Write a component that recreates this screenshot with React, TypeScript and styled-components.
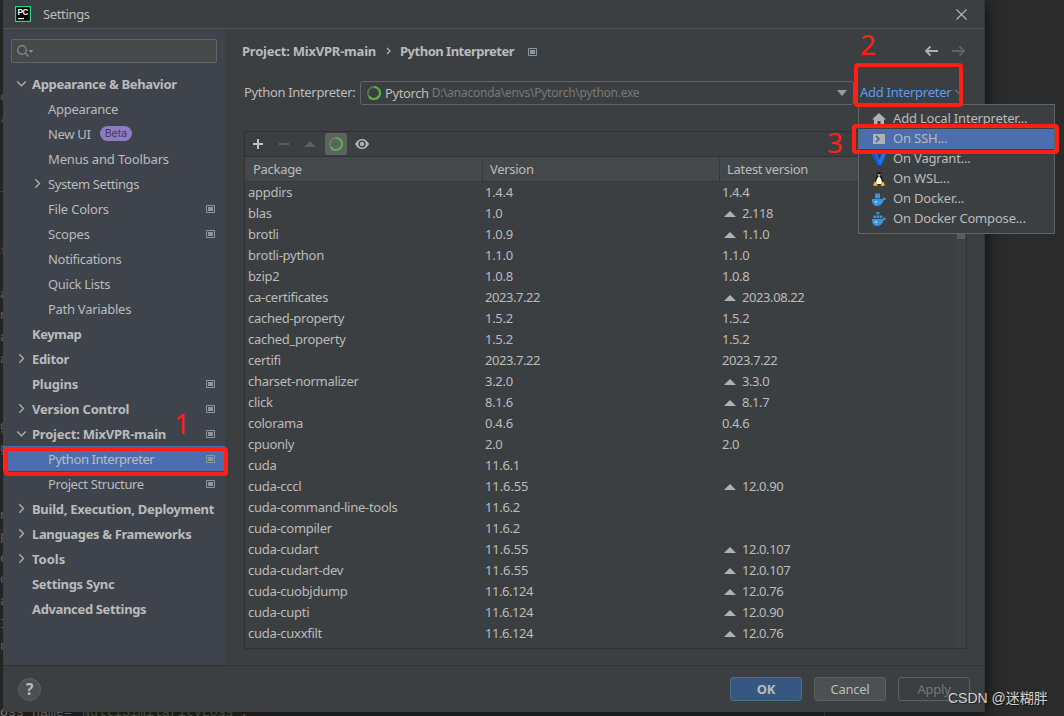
import React from 'react';
import styled, { createGlobalStyle } from 'styled-components';

const Global = createGlobalStyle`
  * { box-sizing: border-box; }
  html, body { margin: 0; height: 716px; overflow: hidden; background: #2b2b2b; }
  body { font: 13px/20px "Noto Sans", "Noto Sans CJK SC", sans-serif; color: #bbbbbb; }
`;

const Desktop = styled.div`
  position: relative;
  width: 1064px;
  height: 716px;
  overflow: hidden;
  background: #2b2b2b;
`;
const EditorStrip = styled.div`
  position: absolute;
  inset: 0;
  font: 13.3px/21px "Liberation Mono", monospace;
`;
const Code = styled.span<{ $x: number; $y: number; $c: string }>`
  position: absolute;
  left: ${p => p.$x}px;
  top: ${p => p.$y}px;
  color: ${p => p.$c};
  white-space: pre;
`;
const Guide = styled.span`
  position: absolute;
  left: 824px;
  bottom: 0;
  width: 1px;
  height: 20px;
  background: #4a4a4a;
`;
const Dialog = styled.main`
  position: relative;
  display: flex;
  flex-direction: column;
  width: 982px;
  height: 712px;
  margin-left: 3px;
  background: #3c3f41;
  border-right: 1px solid #333536;
  box-shadow: 3px 4px 14px rgba(0, 0, 0, 0.55);
`;
const TitleBar = styled.header`
  display: flex;
  align-items: center;
  height: 29px;
  flex: none;
  padding: 0 17px 0 12px;
  border-bottom: 1px solid #515355;
`;
const Title = styled.span`
  flex: 1;
  margin-left: 12px;
  letter-spacing: -0.35px;
`;
const Middle = styled.div`
  display: flex;
  flex: 1;
  min-height: 0;
`;
const Sidebar = styled.nav`
  width: 222px;
  flex: none;
  background: #3e434c;
  padding-top: 10px;
`;
const Search = styled.div`
  display: flex;
  align-items: center;
  width: 206px;
  height: 24px;
  margin: 0 0 8px 8px;
  padding-left: 5px;
  border: 1px solid #646464;
  border-radius: 2px;
  background: #45494a;
`;
const TreeRow = styled.div<{ $level: number; $selected?: boolean }>`
  display: flex;
  align-items: center;
  height: 25px;
  padding-left: ${p => 13 + p.$level * 16}px;
  padding-right: 10px;
  font-weight: ${p => (p.$level === 0 ? 700 : 400)};
  background: ${p => (p.$selected ? '#4b6eaf' : 'transparent')};
  white-space: nowrap;
`;
const Arrow = styled.span`
  display: flex;
  width: 16px;
  flex: none;
`;
const Label = styled.span<{ $ls?: number }>`
  letter-spacing: ${p => p.$ls ?? 0}px;
`;
const Beta = styled.span`
  height: 15px;
  margin-left: 9px;
  padding: 0 5px;
  border-radius: 8px;
  background: #8f7bc4;
  color: #3e3a52;
  font: 10.500px/15px Inter, sans-serif;
`;
const Spacer = styled.span`
  flex: 1;
`;
const Content = styled.section`
  flex: 1;
  min-width: 0;
  padding: 12px 0 0 17px;
`;
const Crumbs = styled.div`
  display: flex;
  align-items: center;
  height: 20px;
  padding-right: 18px;
  font-weight: 700;
`;
const CrumbSep = styled.span`
  display: flex;
  width: 24px;
  justify-content: center;
`;
const CrumbIcon = styled.span`
  display: flex;
  margin: 1px 0 0 14px;
`;
const NavArrows = styled.span`
  display: flex;
  gap: 12px;
`;
const Picker = styled.div`
  display: flex;
  align-items: center;
  height: 24px;
  margin-top: 20px;
  padding-left: 2px;
`;
const PickerLabel = styled.label`
  width: 116px;
  padding-bottom: 2px;
  letter-spacing: -0.33px;
  white-space: nowrap;
`;
const Combo = styled.div`
  display: flex;
  align-items: center;
  width: 494px;
  height: 24px;
  padding: 0 6px 0 5px;
  border: 1px solid #646464;
  border-radius: 3px;
  white-space: nowrap;
`;
const ComboName = styled.span`
  margin: 0 3px 0 3px;
  letter-spacing: -0.4px;
`;
const ComboPath = styled.span`
  color: #787878;
  font-size: 12px;
  letter-spacing: -0.25px;
`;
const AddLink = styled.a`
  display: flex;
  align-items: center;
  gap: 4px;
  margin-left: 6px;
  padding-bottom: 2px;
  color: #589df6;
  letter-spacing: -0.27px;
  white-space: nowrap;
`;
const Panel = styled.div`
  width: 723px;
  height: 518px;
  margin: 26px 0 0 2px;
  border: 1px solid #323232;
`;
const Toolbar = styled.div`
  display: flex;
  align-items: center;
  height: 25px;
  gap: 4px;
  padding-left: 2px;
  border-bottom: 1px solid #323232;
`;
const Tool = styled.span<{ $on?: boolean }>`
  display: flex;
  align-items: center;
  justify-content: center;
  width: 22px;
  height: 22px;
  border-radius: 2px;
  background: ${p => (p.$on ? '#5c6164' : 'transparent')};
`;
const Columns = styled.div`
  display: grid;
  grid-template-columns: 237px 237px 1fr;
`;
const HeaderRow = styled(Columns)`
  grid-template-columns: 238px 237px 1fr;
  height: 25px;
  padding: 1px 0;
  background: #45484a;
  border-bottom: 1px solid #35383a;
`;
const HeaderCell = styled.span`
  padding-left: 7px;
  line-height: 23px;
  letter-spacing: -0.3px;
  border-right: 1px solid #35383a;
  &:first-child { padding-left: 8px; }
  &:last-child { border-right: 0; }
`;
const TableBody = styled.div`
  display: flex;
  height: 466px;
`;
const Rows = styled.div`
  flex: 1;
`;
const Track = styled.div`
  width: 10px;
  background: #3f4244;
  padding: 51px 1px 0;
`;
const Thumb = styled.div`
  height: 6px;
  background: #5a5d5f;
`;
const Row = styled(Columns)`
  height: 21px;
  line-height: 21px;
`;
const Cell = styled.span<{ $ls: number }>`
  display: flex;
  align-items: center;
  padding-left: 3px;
  letter-spacing: ${p => p.$ls}px;
  white-space: nowrap;
`;
const Up = styled.span`
  display: flex;
  width: 18px;
  margin-left: 2px;
`;
const Footer = styled.footer`
  display: flex;
  align-items: center;
  gap: 12px;
  height: 47px;
  flex: none;
  padding: 0 14px 0 15px;
  border-top: 1px solid #323232;
`;
const Help = styled.span`
  width: 23px;
  height: 23px;
  margin-top: 1px;
  border: 1px solid #5e6060;
  border-radius: 50%;
  background: #4c5052;
  font: 700 16px/21px "Noto Sans", sans-serif;
  text-align: center;
`;
const Button = styled.button<{ $kind: 'primary' | 'plain' | 'disabled' }>`
  width: 72px;
  height: 24px;
  padding: 0;
  border: 1px solid ${p => (p.$kind === 'primary' ? '#4c708c' : '#5e6060')};
  border-radius: 3px;
  background: ${p => (p.$kind === 'primary' ? '#365880' : p.$kind === 'plain' ? '#4c5052' : 'transparent')};
  color: ${p => (p.$kind === 'disabled' ? '#777777' : '#bbbbbb')};
  font: ${p => (p.$kind === 'primary' ? 700 : 400)} 13px/20px "Noto Sans", sans-serif;
  letter-spacing: -0.25px;
`;
const Menu = styled.div`
  position: absolute;
  left: 858px;
  top: 104px;
  width: 197px;
  height: 130px;
  padding-top: 4px;
  border: 1px solid #616365;
  background: #3c3f41;
`;
const MenuItem = styled.div<{ $selected?: boolean }>`
  display: flex;
  align-items: center;
  height: 20px;
  padding-left: 12px;
  gap: 6px;
  background: ${p => (p.$selected ? '#4b6eaf' : 'transparent')};
  letter-spacing: -0.18px;
  line-height: 18px;
  white-space: nowrap;
`;
const MenuText = styled.span`
  padding-bottom: 2px;
`;
const Frame = styled.div<{ $x: number; $y: number; $w: number; $h: number }>`
  position: absolute;
  left: ${p => p.$x}px;
  top: ${p => p.$y}px;
  width: ${p => p.$w}px;
  height: ${p => p.$h}px;
  border: 4px solid #ff1f14;
  border-radius: 4px;
`;
const Step = styled.span<{ $x: number; $y: number }>`
  position: absolute;
  left: ${p => p.$x}px;
  top: ${p => p.$y}px;
  color: #ff1f14;
  font: 28px/30px "Noto Sans", sans-serif;
`;
const Watermark = styled.span`
  position: absolute;
  left: 948px;
  top: 687px;
  color: #d2d2d2;
  font: 14px/22px "Liberation Sans", "Noto Sans CJK SC", sans-serif;
  text-shadow: 1px 1px 1px rgba(0, 0, 0, 0.5);
  white-space: nowrap;
`;

const ProjectIcon = () => (
  <svg width="9" height="8" viewBox="0 0 9 8">
    <path d="M.5.5h8v7h-8z" fill="none" stroke="#8a979f" />
    <path d="M2 2h5v4H2z" fill="#8a979f" />
  </svg>
);
const Chevron = ({ open }: { open?: boolean }) => (
  <svg width="11" height="11" viewBox="0 0 11 11" fill="none" stroke="#adadad" strokeWidth="1.4">
    <path d={open ? 'M1.200 3.500l4.300 4.200 4.300-4.200' : 'M3.300 1.200l4.200 4.300-4.200 4.300'} />
  </svg>
);
const Ring = () => (
  <svg width="16" height="16" viewBox="0 0 16 16" fill="none" stroke="#59b140" strokeWidth="2.2">
    <path d="M8 2a6 6 0 1 1-5 9.300" />
    <path d="M3 11.300A6 6 0 0 1 8 2" strokeDasharray="1.500 .8" strokeWidth="1.800" opacity=".8" />
  </svg>
);
const Triangle = ({ w, color, down }: { w: number; color: string; down?: boolean }) => (
  <svg width={w} height="6" viewBox="0 0 12 6" preserveAspectRatio="none">
    <path d={down ? 'M0 0h12L6 6z' : 'M0 6h12L6 0z'} fill={color} />
  </svg>
);
const Logo = () => (
  <svg width="16" height="16" viewBox="0 0 16 16">
    <path d="M.6.6h14.800v14.800H.6z" fill="#000" stroke="#21d789" strokeWidth="1.200" />
    <text x="2.500" y="9" fontFamily="Liberation Sans" fontWeight="700" fontSize="8.200" fill="#fff" textLength="11">PC</text>
    <path d="M3 12h6v1.200H3z" fill="#fff" />
  </svg>
);
const NavArrow = ({ color, right }: { color: string; right?: boolean }) => (
  <svg width="15" height="12" viewBox="0 0 15 12" fill="none" stroke={color} strokeWidth="1.800">
    <path d={right ? 'M1 6h12M8.500 1.500l4.500 4.500-4.500 4.500' : 'M14 6H2M6.500 1.500L2 6l4.500 4.500'} />
  </svg>
);

const Whale = ({ compose }: { compose?: boolean }) => (
  <svg width="16" height="16" viewBox="0 0 16 16" fill="#3596e5">
    <path d="M1 8h10.500c.7-.3.9-1.500.5-2.300 1 .2 1.400 1 1.500 1.700 1-.1 1.500.1 1.800.4-.5 1-1.600 1.300-2.600 1.300C11.800 12.500 9.500 15 6.200 15 2.800 15 .8 12.500 1 8z" />
    {compose ? <path d="M5.500 1h2.800v2.500H5.500zM2.500 4.500h2.600V7H2.500zM5.700 4.500h2.600V7H5.700zM8.900 4.500h2.300V7H8.900z" /> : <path d="M4 2.500h5V7.300H4z" />}
    <circle cx="5" cy="11" r="1.300" fill="#8cc5f2" />
  </svg>
);
const menuIcons = [
  <svg width="16" height="16" viewBox="0 0 16 16"><path d="M8 2l7 6.500h-2V14H9.500v-4h-3v4H3V8.500H1z" fill="#afb1b3" /></svg>,
  <svg width="16" height="16" viewBox="0 0 16 16"><path d="M2 3h12v10H2z" fill="#afb1b3" /><path d="M5 5l3 3-3 3" fill="none" stroke="#4b6eaf" strokeWidth="1.800" /></svg>,
  <svg width="16" height="16" viewBox="0 0 16 16"><path d="M1.500 2h4l2.500 7 2-4V2h4.500v2.500L10 14H6.500L1.500 4z" fill="#1478ff" /><path d="M1.500 2H4l4.500 12h-2L1.500 4z" fill="#1057d8" /></svg>,
  <svg width="16" height="16" viewBox="0 0 16 16"><path d="M8 1C5.800 1 5.500 3 5.700 5 5 7 3 9 3.400 12c1 2 8 2 9.200 0C13 9 11 7 10.300 5 10.500 3 10.200 1 8 1z" fill="#151515" /><path d="M8 5.500c-2 1.500-3.300 4-2.700 7.500h5.400c.6-3.500-.7-6-2.700-7.500z" fill="#fff" /><path d="M6.500 4.500L8 3.800l1.500.7L8 6zM4 10l2.800 4.200c-1 1.300-3.300.6-4.800 0zM12 10l2 4.200c-1.500.8-3.300 1.200-4.500 0z" fill="#f5b915" /><path d="M6.700 3h.9v.9h-.9zM8.500 3h.9v.9h-.9z" fill="#fff" /></svg>,
  <Whale />,
  <Whale compose />,
];
const menuLabels = ['Add Local Interpreter...', 'On SSH...', 'On Vagrant...', 'On WSL...', 'On Docker...', 'On Docker Compose...'];

type Node = { t: string; level: number; ls: number; arrow?: 'open' | 'closed'; badge?: boolean; mark?: boolean; sel?: boolean };
const tree: Node[] = [
  { t: 'Appearance & Behavior', level: 0, ls: -0.33, arrow: 'open' },
  { t: 'Appearance', level: 1, ls: -0.3 },
  { t: 'New UI', level: 1, ls: -0.3, badge: true },
  { t: 'Menus and Toolbars', level: 1, ls: -0.16 },
  { t: 'System Settings', level: 1, ls: -0.4, arrow: 'closed' },
  { t: 'File Colors', level: 1, ls: -0.2, mark: true },
  { t: 'Scopes', level: 1, ls: -0.17, mark: true },
  { t: 'Notifications', level: 1, ls: -0.31 },
  { t: 'Quick Lists', level: 1, ls: -0.3 },
  { t: 'Path Variables', level: 1, ls: -0.28 },
  { t: 'Keymap', level: 0, ls: -0.5 },
  { t: 'Editor', level: 0, ls: -0.33, arrow: 'closed' },
  { t: 'Plugins', level: 0, ls: -0.2, mark: true },
  { t: 'Version Control', level: 0, ls: -0.2, arrow: 'closed', mark: true },
  { t: 'Project: MixVPR-main', level: 0, ls: -0.22, arrow: 'open', mark: true },
  { t: 'Python Interpreter', level: 1, ls: -0.44, mark: true, sel: true },
  { t: 'Project Structure', level: 1, ls: -0.4, mark: true },
  { t: 'Build, Execution, Deployment', level: 0, ls: -0.28, arrow: 'closed' },
  { t: 'Languages & Frameworks', level: 0, ls: -0.36, arrow: 'closed' },
  { t: 'Tools', level: 0, ls: 0, arrow: 'closed' },
  { t: 'Settings Sync', level: 0, ls: -0.31 },
  { t: 'Advanced Settings', level: 0, ls: -0.35 },
];

const packages: [string, string, string, boolean?][] = [
  ['appdirs', '1.4.4', '1.4.4'],
  ['blas', '1.0', '2.118', true],
  ['brotli', '1.0.9', '1.1.0', true],
  ['brotli-python', '1.1.0', '1.1.0'],
  ['bzip2', '1.0.8', '1.0.8'],
  ['ca-certificates', '2023.7.22', '2023.08.22', true],
  ['cached-property', '1.5.2', '1.5.2'],
  ['cached_property', '1.5.2', '1.5.2'],
  ['certifi', '2023.7.22', '2023.7.22'],
  ['charset-normalizer', '3.2.0', '3.3.0', true],
  ['click', '8.1.6', '8.1.7', true],
  ['colorama', '0.4.6', '0.4.6'],
  ['cpuonly', '2.0', '2.0'],
  ['cuda', '11.6.1', ''],
  ['cuda-cccl', '11.6.55', '12.0.90', true],
  ['cuda-command-line-tools', '11.6.2', ''],
  ['cuda-compiler', '11.6.2', ''],
  ['cuda-cudart', '11.6.55', '12.0.107', true],
  ['cuda-cudart-dev', '11.6.55', '12.0.107', true],
  ['cuda-cuobjdump', '11.6.124', '12.0.76', true],
  ['cuda-cupti', '11.6.124', '12.0.90', true],
  ['cuda-cuxxfilt', '11.6.124', '12.0.76', true],
];

const gutter: [string, number, string][] = [
  ['e', 87, '#4f7a4a'], ['/', 108, '#4f7a4a'], ['_', 176, '#4f7a4a'], ['s', 240, '#6d4a78'],
  ['a', 284, '#6c7480'], ['n', 305, '#6c7480'], ['a', 327, '#6c7480'], ['a', 349, '#6c7480'],
  ['g', 416, '#6c7480'], ['g', 438, '#6c7480'], ['n', 505, '#5b7590'], ['p', 526, '#6c7480'],
  ['e', 548, '#6c7480'], ['c', 569, '#5b7590'], ['a', 591, '#6c7480'], ['I', 614, '#6c7480'], ['n', 636, '#5b7590'],
];

export default function App() {
  return (
    <Desktop>
      <Global />
      <EditorStrip>
        {gutter.map(([ch, y, c]) => <Code key={y} $x={0} $y={y} $c={c}>{ch}</Code>)}
        <Code $x={0} $y={702} $c="#8a8d91">oss_name=</Code>
        <Code $x={74} $y={702} $c="#5d7a50">'NultiSimilarityLoss'</Code>
        <Code $x={240} $y={702} $c="#a8683a">.</Code>
        <Guide />
      </EditorStrip>
      <Dialog>
        <TitleBar>
          <Logo />
          <Title>Settings</Title>
          <svg width="11" height="11" viewBox="0 0 11 11" stroke="#b8b8b8" strokeWidth="1.100"><path d="M.5.5l10 10M10.500.5l-10 10" /></svg>
        </TitleBar>
        <Middle>
          <Sidebar>
            <Search>
              <svg width="17" height="14" viewBox="0 0 17 14" fill="none" stroke="#8a8d8f" strokeWidth="1.200"><circle cx="5" cy="6" r="4.300" /><path d="M8.200 9.200L11.500 12.500" /><path d="M11.500 6h5L14 8.800z" fill="#8a8d8f" stroke="none" /></svg>
            </Search>
            {tree.map(n => (
              <TreeRow key={n.t} $level={n.level} $selected={n.sel}>
                <Arrow>{n.arrow && <Chevron open={n.arrow === 'open'} />}</Arrow>
                <Label $ls={n.ls}>{n.t}</Label>
                {n.badge && <Beta>Beta</Beta>}
                <Spacer />
                {n.mark && <ProjectIcon />}
              </TreeRow>
            ))}
          </Sidebar>
          <Content>
            <Crumbs>
              <Label $ls={-0.22}>Project: MixVPR-main</Label>
              <CrumbSep><svg width="5" height="8" viewBox="0 0 5 8" fill="none" stroke="#bbb" strokeWidth="1.200"><path d="M1 .8L4 4 1 7.200" /></svg></CrumbSep>
              <Label $ls={-0.5}>Python Interpreter</Label>
              <CrumbIcon><ProjectIcon /></CrumbIcon>
              <Spacer />
              <NavArrows><NavArrow color="#afb1b3" /><NavArrow color="#5f6264" right /></NavArrows>
            </Crumbs>
            <Picker>
              <PickerLabel>Python Interpreter:</PickerLabel>
              <Combo>
                <Ring />
                <ComboName>Pytorch</ComboName>
                <ComboPath>D:\anaconda\envs\Pytorch\python.exe</ComboPath>
                <Spacer />
                <Triangle w={10} color="#9a9da0" down />
              </Combo>
              <AddLink>Add Interpreter <svg width="8" height="6" viewBox="0 0 8 6" fill="none" stroke="#9a9da0"><path d="M.5 1L4 4.500 7.500 1" /></svg></AddLink>
            </Picker>
            <Panel>
              <Toolbar>
                <Tool><svg width="10" height="10" viewBox="0 0 10 10" stroke="#c0c2c4" strokeWidth="2"><path d="M5 0v10M0 5h10" /></svg></Tool>
                <Tool><svg width="10" height="10" viewBox="0 0 10 10" stroke="#5f6264" strokeWidth="2"><path d="M0 5h10" /></svg></Tool>
                <Tool><Triangle w={12} color="#5b5e60" /></Tool>
                <Tool $on><Ring /></Tool>
                <Tool><svg width="14" height="10" viewBox="0 0 14 10"><path d="M0 5c1.500-3 4-5 7-5s5.500 2 7 5c-1.500 3-4 5-7 5S1.500 8 0 5z" fill="#afb1b3" /><circle cx="7" cy="5" r="2.900" fill="none" stroke="#3c3f41" strokeWidth="1.400" /></svg></Tool>
              </Toolbar>
              <HeaderRow>
                <HeaderCell>Package</HeaderCell>
                <HeaderCell>Version</HeaderCell>
                <HeaderCell>Latest version</HeaderCell>
              </HeaderRow>
              <TableBody>
                <Rows>
                  {packages.map(([name, version, latest, update]) => (
                    <Row key={name}>
                      <Cell $ls={-0.28}>{name}</Cell>
                      <Cell $ls={version.length > 7 ? -0.45 : version.length > 6 ? -0.1 : -0.3}>{version}</Cell>
                      <Cell $ls={-0.42}>{update && <Up><Triangle w={12} color="#afb1b3" /></Up>}{latest}</Cell>
                    </Row>
                  ))}
                </Rows>
                <Track><Thumb /></Track>
              </TableBody>
            </Panel>
          </Content>
        </Middle>
        <Footer>
          <Help>?</Help>
          <Spacer />
          <Button $kind="primary">OK</Button>
          <Button $kind="plain">Cancel</Button>
          <Button $kind="disabled">Apply</Button>
        </Footer>
      </Dialog>
      <Menu>
        {menuLabels.map((t, i) => (
          <MenuItem key={t} $selected={i === 1}>{menuIcons[i]}<MenuText>{t}</MenuText></MenuItem>
        ))}
      </Menu>
      <Frame $x={4} $y={447} $w={224} $h={29} />
      <Frame $x={854} $y={63} $w={109} $h={44} />
      <Frame $x={852} $y={124} $w={207} $h={30} />
      <Step $x={174} $y={408}>1</Step>
      <Step $x={860} $y={29}>2</Step>
      <Step $x={827} $y={127}>3</Step>
      <Watermark>CSDN @迷糊胖</Watermark>
    </Desktop>
  );
}
